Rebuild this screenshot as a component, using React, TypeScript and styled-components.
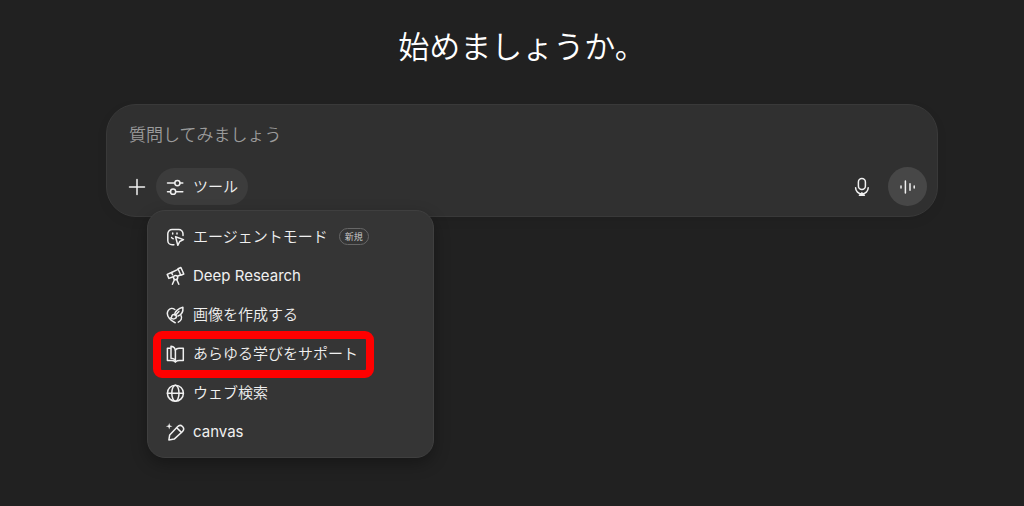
import React from "react";
import styled, { createGlobalStyle } from "styled-components";

const GlobalStyle = createGlobalStyle`
  *, *::before, *::after { box-sizing: border-box; }
  body {
    margin: 0;
    background: #212121;
    color: #f0f0f0;
    font-family: Inter, "Noto Sans CJK JP", sans-serif;
    font-size: 15px;
    font-weight: 350;
    line-height: 20px;
  }
  button, input { font: inherit; color: inherit; }
  button { border: 0; padding: 0; background: none; cursor: pointer; }
`;

const Page = styled.main`
  min-height: 100vh;
  padding: 23px 86px 48px 106px;
`;

const Title = styled.h1`
  margin: 0 0 33px;
  text-align: center;
  font-size: 31px;
  line-height: 48px;
  font-weight: 350;
  color: #ffffff;
`;

const Composer = styled.form`
  padding: 10px;
  border: 1px solid #393939;
  border-radius: 30px;
  background: #303030;
  box-shadow: 0 4px 12px rgba(0, 0, 0, 0.06);
`;

const Prompt = styled.input`
  display: block;
  width: 100%;
  height: 40px;
  margin-bottom: 12px;
  padding: 0 12px;
  border: 0;
  outline: 0;
  background: transparent;
  font-size: 17px;
  &::placeholder { color: #9b9b9b; opacity: 1; }
`;

const Toolbar = styled.div`
  display: flex;
  align-items: center;
`;

const RoundButton = styled.button<{ $filled?: boolean }>`
  display: grid;
  place-items: center;
  width: 39px;
  height: 39px;
  border-radius: 50%;
  background: ${(p) => (p.$filled ? "#474747" : "transparent")};
`;

const ToolsAnchor = styled.div`
  position: relative;
  margin-right: auto;
`;

const ToolsButton = styled.button`
  display: flex;
  align-items: center;
  gap: 8px;
  height: 37px;
  padding: 0 10px 0 9px;
  border-radius: 19px;
  background: #3c3c3c;
`;

const Actions = styled.div`
  display: flex;
  gap: 7px;
`;

const Menu = styled.div`
  position: absolute;
  top: 42px;
  left: -9px;
  width: 287px;
  padding: 6px;
  border: 1px solid #3f3f3f;
  border-radius: 18px;
  background: #353535;
  box-shadow: 0 6px 16px rgba(0, 0, 0, 0.3);
`;

const MenuItem = styled.button`
  position: relative;
  display: flex;
  align-items: center;
  gap: 8px;
  width: 100%;
  height: 39px;
  padding: 0 11px;
  text-align: left;
  white-space: nowrap;
  &:lang(en) { font-weight: 400; }
`;

const Badge = styled.span`
  margin-left: 3px;
  padding: 0 5px;
  border: 1px solid #676767;
  border-radius: 9px;
  font-size: 9px;
  line-height: 15px;
  color: #d0d0d0;
`;

const Highlight = styled.span`
  position: absolute;
  top: -3px;
  left: -1px;
  width: 221px;
  height: 47px;
  border: 8px solid #ff0000;
  border-radius: 9px;
  pointer-events: none;
`;

const Glyph = styled.svg`
  flex: none;
  width: 20px;
  height: 20px;
  fill: none;
  stroke: currentColor;
  stroke-width: 1.5;
  stroke-linecap: round;
  stroke-linejoin: round;
`;

function Icon({ children }: { children: React.ReactNode }) {
  return (
    <Glyph viewBox="0 0 20 20" aria-hidden="true">
      {children}
    </Glyph>
  );
}

const items = [
  {
    label: "エージェントモード",
    lang: "ja",
    badge: "新規",
    icon: (
      <>
        <path d="M18 8.6V6.8a4.3 4.3 0 0 0-4.3-4.3H7.1a4.3 4.3 0 0 0-4.3 4.3v6.7a4.3 4.3 0 0 0 4.3 4.3h1.8" />
        <path d="m10.6 9.8 7.9 2.8-3.8 1.9-1.9 3.8z" />
        <path d="M7.7 6.1v1M12 6.1v1M6.6 10.5c.3.7.9 1.1 1.6 1.2" />
      </>
    ),
  },
  {
    label: "Deep Research",
    lang: "en",
    icon: (
      <>
        <path d="M13 2.8 15.9 1.5 18.8 8l-3 1.3z" />
        <path d="M13 3.4 6.5 6.5 2.2 8.4l1.7 4 4.3-1.6M12.9 10l2.6-1" />
        <path d="m6.5 6.5 1 2.3" />
        <circle cx="10.6" cy="11.6" r="2.1" />
        <path d="m9.5 13.5-2.1 4.8M11.7 13.5l2.1 4.8" />
      </>
    ),
  },
  {
    label: "画像を作成する",
    lang: "ja",
    icon: (
      <>
        <path d="M9.8 4.5C7.7 3 4.9 3.2 3.3 5.4 1.7 7.8 2.4 10.9 4.3 13.3c1.5 1.9 3.6 3.5 5.9 4.5" />
        <path d="M9.8 8.8c.8-3.2 3.8-5.3 8.1-6.6.4 4-1.2 7.6-4.9 8.8" />
        <path d="M13.9 6.4 10.2 10.4M16 10.6c1.5 2.5.1 5.2-2.7 6.6" />
        <path d="M5.7 13c1.2-.4.8-1.6 1.4-2.6 1.1-1.6 3.9-1.1 4.3.8.5 2.2-2.9 3.7-5.7 1.8z" />
      </>
    ),
  },
  {
    label: "あらゆる学びをサポート",
    lang: "ja",
    highlighted: true,
    icon: (
      <>
        <path d="M10.4 17.8c-1.3-1-2.3-1.3-4.1-1.3H2.4V4.2h3" />
        <path d="M6 14.2V2.2c2.6.3 4.4 2 4.4 4.7v10.9c0-2.2-1.8-3.4-4.4-3.6z" />
        <path d="M10.4 6.2c.7-1.3 1.8-2 3.6-2h4.3v12.3h-3.8c-1.8 0-2.8.3-4.1 1.3" />
      </>
    ),
  },
  {
    label: "ウェブ検索",
    lang: "ja",
    icon: (
      <>
        <circle cx="10.4" cy="10.2" r="8" />
        <ellipse cx="10.4" cy="10.2" rx="3.6" ry="8" />
        <path d="M2.4 10.2h16" />
      </>
    ),
  },
  {
    label: "canvas",
    lang: "en",
    icon: (
      <>
        <path d="m3.9 17.9.8-5 7.8-8.1c1.4-1.5 3.6-1.6 5-.3 1.4 1.4 1.4 3.5 0 5L9.2 17.1z" />
        <path d="m11.7 5.7 4.7 4.7" />
        <path
          d="M4.2.9 5 3.4l2.5.8L5 5l-.8 2.5L3.4 5 .9 4.2l2.5-.8z"
          fill="currentColor"
          stroke="none"
        />
      </>
    ),
  },
];

export default function App() {
  return (
    <>
      <GlobalStyle />
      <Page lang="ja">
        <Title>始めましょうか。</Title>
        <Composer onSubmit={(e) => e.preventDefault()}>
          <Prompt
            type="text"
            aria-label="質問"
            placeholder="質問してみましょう"
          />
          <Toolbar>
            <RoundButton type="button" aria-label="追加">
              <Icon>
                <path d="M10 2.5v15M2.5 10h15" />
              </Icon>
            </RoundButton>
            <ToolsAnchor>
              <ToolsButton type="button" aria-haspopup="menu" aria-expanded>
                <Icon>
                  <path d="M2.5 6.1h7.3M15 6.1h2.8M2.5 14.7h3M10.7 14.7h7.1" />
                  <circle cx="12.4" cy="6.1" r="2.6" />
                  <circle cx="8.1" cy="14.7" r="2.6" />
                </Icon>
                ツール
              </ToolsButton>
              <Menu role="menu">
                {items.map((item) => (
                  <MenuItem
                    key={item.label}
                    type="button"
                    role="menuitem"
                    lang={item.lang}
                  >
                    <Icon>{item.icon}</Icon>
                    <span>{item.label}</span>
                    {item.badge && <Badge>{item.badge}</Badge>}
                    {item.highlighted && <Highlight />}
                  </MenuItem>
                ))}
              </Menu>
            </ToolsAnchor>
            <Actions>
              <RoundButton type="button" aria-label="音声入力">
                <Icon>
                  <rect x="6.4" y="1.6" width="7" height="11" rx="3.5" />
                  <path d="M3.6 10.7a6.3 6.3 0 0 0 12.6 0M9.9 15.8v2.4M7.4 18.2h5" />
                </Icon>
              </RoundButton>
              <RoundButton type="button" aria-label="音声モード" $filled>
                <Icon>
                  <path d="M3 9v2M7.4 4v12M12 6.8v6.4M16.2 9v2" />
                </Icon>
              </RoundButton>
            </Actions>
          </Toolbar>
        </Composer>
      </Page>
    </>
  );
}
